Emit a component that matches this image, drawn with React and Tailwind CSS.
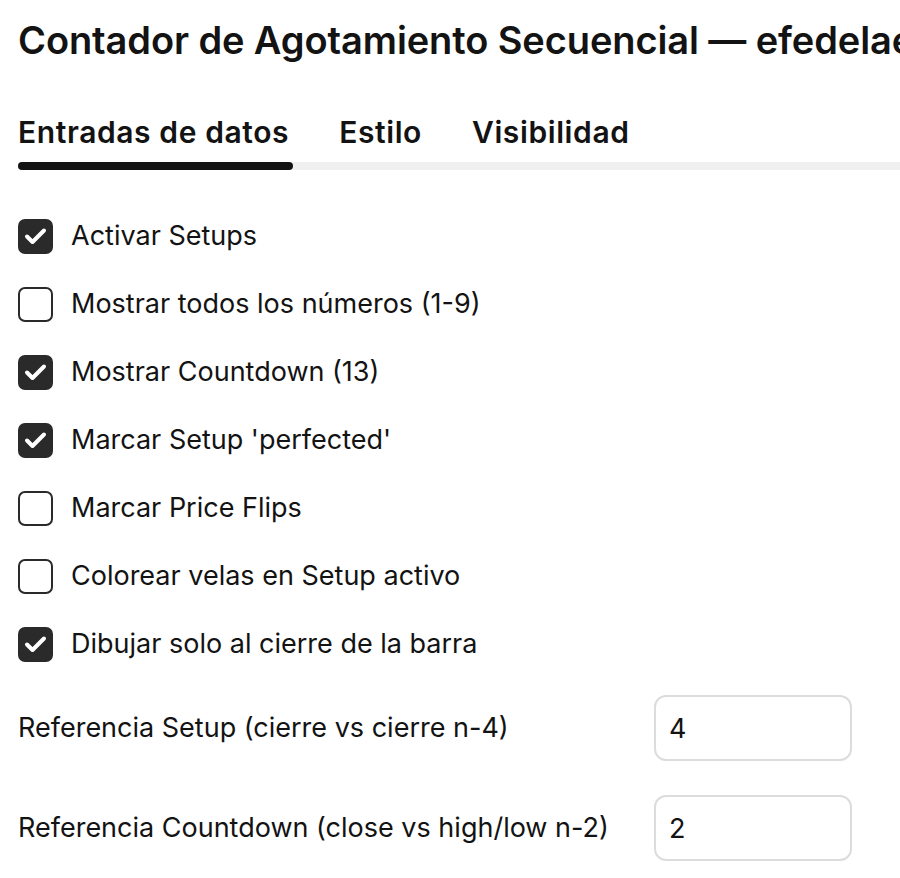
import { useState } from "react";

const options = [
  { id: "setups", label: "Activar Setups", checked: true },
  { id: "allNumbers", label: "Mostrar todos los números (1-9)", checked: false },
  { id: "countdown", label: "Mostrar Countdown (13)", checked: true },
  { id: "perfected", label: "Marcar Setup 'perfected'", checked: true },
  { id: "flips", label: "Marcar Price Flips", checked: false },
  { id: "colorBars", label: "Colorear velas en Setup activo", checked: false },
  { id: "barClose", label: "Dibujar solo al cierre de la barra", checked: true },
];

const numberInputs = [
  { id: "setupRef", label: "Referencia Setup (cierre vs cierre n-4)", value: "4" },
  { id: "cdRef", label: "Referencia Countdown (close vs high/low n-2)", value: "2" },
];

const tabs = ["Entradas de datos", "Estilo", "Visibilidad"];

// Checkbox square with a drawn tick
const Check = ({ checked, onClick }) => (
  <button
    type="button"
    onClick={onClick}
    className={`w-[35px] h-[35px] shrink-0 rounded-[7px] flex items-center justify-center ${
      checked ? "bg-[#2a2a2a]" : "bg-white border-2 border-[#2a2a2a]"
    }`}
  >
    {checked && (
      <svg width="35" height="35" viewBox="0 0 35 35" fill="none">
        <path
          d="M9 17.5l5.5 5.5L26 11.5"
          stroke="white"
          strokeWidth="4"
          strokeLinecap="round"
          strokeLinejoin="round"
        />
      </svg>
    )}
  </button>
);

const App = () => {
  const [values, setValues] = useState(
    Object.fromEntries(options.map((o) => [o.id, o.checked]))
  );
  const [active, setActive] = useState(0);

  return (
    <div
      className="w-[900px] h-[878px] overflow-hidden bg-white text-[#131313] pl-[18px]"
      style={{ fontFamily: "Inter, 'Noto Sans', sans-serif" }}
    >
      <div className="pt-[17px] w-[882px] overflow-hidden">
        <h1 className="text-[38px] leading-[46px] font-semibold whitespace-nowrap tracking-[-0.1px]">
          Contador de Agotamiento Secuencial — efedelae
        </h1>
      </div>

      {/* tabs */}
      <div className="mt-[51px] flex gap-[50px]">
        {tabs.map((t, i) => (
          <button
            key={t}
            onClick={() => setActive(i)}
            className="text-[30px] leading-[36px] font-semibold whitespace-nowrap tracking-[0.6px]"
          >
            {t}
          </button>
        ))}
      </div>
      <div className="mt-[12px] h-2 bg-[#f0f0f0] rounded-l-full">
        <div className="h-2 w-[275px] bg-[#131313] rounded-full" />
      </div>

      {/* checkbox rows */}
      <div className="mt-[32px] flex flex-col">
        {options.map((o) => (
          <div key={o.id} className="h-[68px] flex items-center gap-[18px]">
            <Check
              checked={values[o.id]}
              onClick={() => setValues({ ...values, [o.id]: !values[o.id] })}
            />
            <span className="text-[27px] leading-[34px] whitespace-nowrap">{o.label}</span>
          </div>
        ))}
      </div>

      {/* number inputs */}
      <div className="flex flex-col">
        {numberInputs.map((n) => (
          <div key={n.id} className="h-[100px] flex items-center">
            <span className="w-[636px] text-[27px] leading-[34px] whitespace-nowrap">{n.label}</span>
            <input
              defaultValue={n.value}
              className="w-[198px] h-[66px] px-[13px] border-2 border-[#dcdcdc] rounded-[12px] text-[27px] outline-none"
            />
          </div>
        ))}
      </div>
    </div>
  );
};

export default App;
